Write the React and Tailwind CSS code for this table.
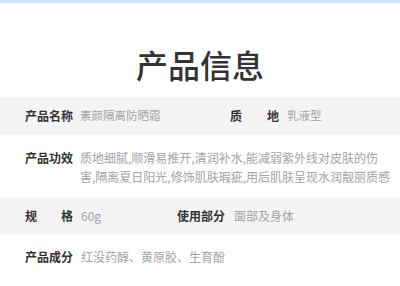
const FONT = "font-['Noto_Sans_CJK_SC','Noto_Sans',sans-serif]"

function Label({ children, spread }) {
  return (
    <div className={`w-[48px] shrink-0 text-[12px] font-bold text-[#333] flex ${spread ? 'justify-between' : ''}`}>
      {children}
    </div>
  )
}

export default function App() {
  return (
    <div className={`w-[400px] h-[286px] bg-white overflow-hidden ${FONT}`}>
      <div className="h-[3px] bg-[#c8e3f7]" />

      <div className="h-[94px] flex justify-center pt-[45px]">
        <h1 className="text-[32px] font-medium text-[#333] leading-none">产品信息</h1>
      </div>

      {/* 产品名称 / 质地 */}
      <div className="h-[38px] bg-[#f5f4f5] flex items-center pl-[25px]">
        <Label>产品名称</Label>
        <div className="ml-[7px] w-[150px] text-[11.5px] text-[#a3a3a3]">素颜隔离防晒霜</div>
        <div className="w-[49px] shrink-0 text-[12px] font-bold text-[#333] flex justify-between">
          <span>质</span><span>地</span>
        </div>
        <div className="ml-[8px] text-[11.5px] text-[#a3a3a3]">乳液型</div>
      </div>

      {/* 产品功效 */}
      <div className="h-[62px] flex items-start pl-[25px] pt-[13px]">
        <div className="leading-[20px]"><Label>产品功效</Label></div>
        <div className="ml-[7px] text-[12px] leading-[19px] text-[#a3a3a3] whitespace-nowrap">
          质地细腻,顺滑易推开,清润补水,能减弱紫外线对皮肤的伤<br />
          害,隔离夏日阳光,修饰肌肤瑕疵,用后肌肤呈现水润靓丽质感
        </div>
      </div>

      {/* 规格 / 使用部分 */}
      <div className="h-[38px] bg-[#f5f4f5] flex items-center pl-[25px]">
        <Label spread><span>规</span><span>格</span></Label>
        <div className="ml-[8px] w-[96px] text-[12px] text-[#a3a3a3]">60g</div>
        <Label>使用部分</Label>
        <div className="ml-[9px] text-[12px] text-[#a3a3a3]">面部及身体</div>
      </div>

      {/* 产品成分 */}
      <div className="h-[44px] flex items-center pl-[25px]">
        <Label>产品成分</Label>
        <div className="ml-[8px] text-[12px] text-[#a3a3a3]">红没药醇、黄原胶、生育酚</div>
      </div>
    </div>
  )
}
